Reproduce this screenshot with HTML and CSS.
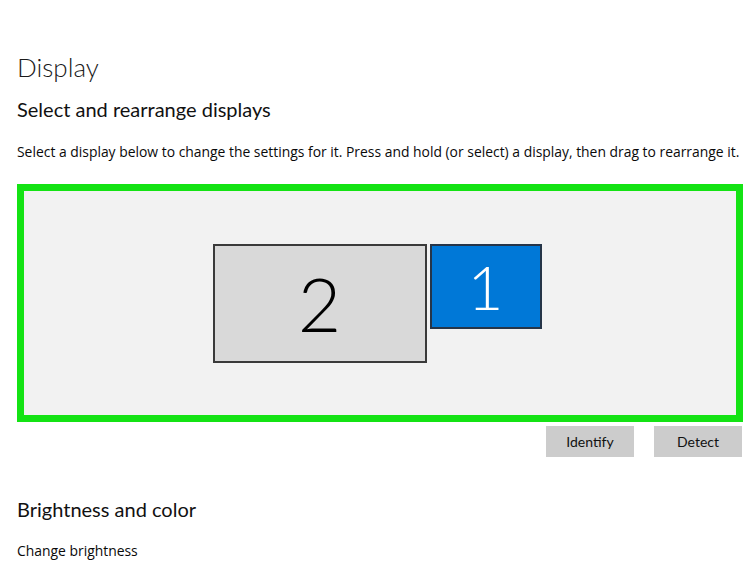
FILE: index.html
```html
<!DOCTYPE html>
<html lang="en">
<head>
  <meta charset="UTF-8">
  <meta name="viewport" content="width=device-width, initial-scale=1.0">
  <title>Display Settings</title>
  <link rel="stylesheet" href="styles.css">
</head>
<body>
  <div class="page">
    <h1>Display</h1>
    <h2>Select and rearrange displays</h2>
    <p class="hint">Select a display below to change the settings for it. Press and hold (or select) a display, then drag to rearrange it.</p>

    <div class="arrange">
      <div class="monitors">
        <div class="monitor second">2</div>
        <div class="monitor main">1</div>
      </div>
    </div>

    <div class="actions">
      <button>Identify</button>
      <button>Detect</button>
    </div>

    <h2 class="section">Brightness and color</h2>
    <p class="label">Change brightness</p>
  </div>
</body>
</html>
```

FILE: styles.css
```css
body {
  margin: 0;
  font-family: Lato, 'Open Sans', sans-serif;
  background-color: #fff;
  color: #111;
}
.page {
  padding: 48px 12px 0 17px;
}
h1 {
  margin: 0;
  font-size: 26px;
  font-weight: 300;
  line-height: 38px;
  color: #1a1a1a;
}
h2 {
  margin: 9px 0 0;
  font-size: 20px;
  font-weight: 400;
  line-height: 28px;
}
.hint,
.label {
  font-family: 'Open Sans', sans-serif;
  font-size: 13.9px;
  line-height: 20px;
  color: #0a0a0a;
}
.hint {
  margin: 19px 0 0;
  white-space: nowrap;
}
.arrange {
  box-sizing: border-box;
  margin-top: 22px;
  width: 726px;
  height: 238px;
  border: 7px solid #14e314;
  background: #f2f2f2;
  display: flex;
  align-items: center;
  justify-content: center;
}
.monitors {
  display: flex;
  align-items: flex-start;
  gap: 3px;
  margin-left: -6px;
}
.monitor {
  box-sizing: border-box;
  display: flex;
  align-items: center;
  justify-content: center;
  font-weight: 300;
  border: 2px solid #3a3a3a;
}
.second {
  width: 214px;
  height: 119px;
  background: #d9d9d9;
  color: #000;
  font-size: 75px;
}
.main {
  width: 112px;
  height: 85px;
  background: #0078d7;
  border-color: #263548;
  color: #fff;
  font-size: 62px;
}
.actions {
  display: flex;
  justify-content: flex-end;
  gap: 20px;
  width: 725px;
  margin-top: 4px;
}
button {
  width: 88px;
  height: 31px;
  border: none;
  background: #cccccc;
  font-family: inherit;
  font-size: 14px;
  color: #111;
  padding: 0;
}
.section {
  margin-top: 38px;
}
.label {
  margin: 18px 0 0;
}
```
